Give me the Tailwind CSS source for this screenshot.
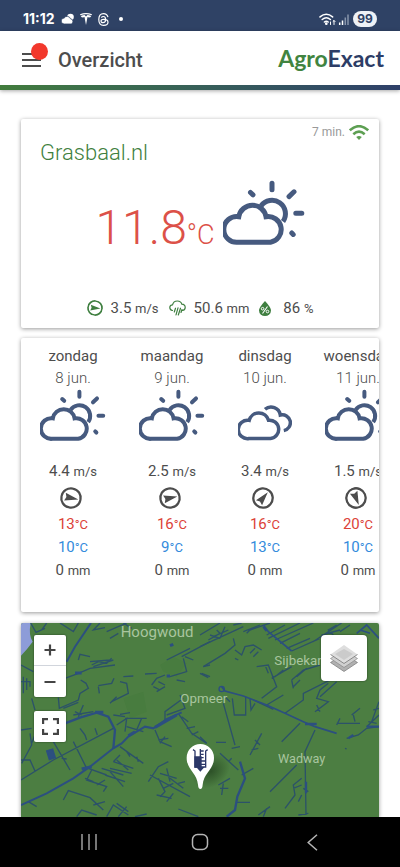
<!DOCTYPE html>
<html lang="nl">
<head>
<meta charset="utf-8">
<meta name="viewport" content="width=device-width, initial-scale=1">
<title>AgroExact</title>
<script src="https://cdn.jsdelivr.net/npm/@tailwindcss/browser@4"></script>
</head>
<body class="flex h-dvh flex-col overflow-hidden bg-white font-['Roboto',sans-serif] text-[#4d4d4d]">

<!-- Shared symbols -->
<svg class="hidden" aria-hidden="true">
  <symbol id="sun-cloud" viewBox="0 0 82 65">
    <g fill="none" stroke="#465a7f" stroke-width="5" stroke-linecap="round" stroke-linejoin="miter">
      <path d="M15.500 62.200A12.900 12.900 0 1 1 15.800 36.700A13.800 13.800 0 0 1 43 36.700A12.900 12.900 0 1 1 47.500 62.200Z"/>
      <path stroke-linecap="butt" d="M38 26A13.200 13.200 0 1 1 60 41.500"/>
      <path d="M49 3.300V9.700M71 11.800L66 16.600M72.800 33.300H78.800M68.800 53L70.200 54.400M27.500 12.500L30 14.800"/>
    </g>
  </symbol>
  <symbol id="clouds" viewBox="0 0 54 52">
    <g fill="none" stroke="#465a7f" stroke-width="3.5">
      <path d="M11 49.500A9.200 9.200 0 1 1 11.200 31.400A10 10 0 0 1 30.500 31.200A9.200 9.200 0 1 1 32.500 49.500Z"/>
      <path d="M27 20.300A9.300 9.300 0 0 1 42.300 26A8 8 0 1 1 45.800 41.600"/>
    </g>
  </symbol>
  <symbol id="arrow" viewBox="0 0 22 22">
    <circle cx="11" cy="11" r="9.700" fill="none" stroke="currentColor" stroke-width="2.300"/>
    <path fill="currentColor" d="M18.500 11L4.800 15L6.300 11L4.800 7Z"/>
  </symbol>
</svg>

<!-- Status bar -->
<div class="flex h-[31px] shrink-0 items-center justify-between bg-[#2f4265] pt-[7px] pr-[23px] pl-[23px] text-white">
  <div class="flex items-center gap-[6px]">
    <span class="font-['Inter',sans-serif] text-sm font-bold">11:12</span>
    <svg class="h-3 w-[13px]" viewBox="0 0 13 11" fill="#fff"><circle cx="9.500" cy="3.500" r="3.300"/><path stroke="#2f4265" stroke-width=".8" d="M3.200 10.500a3 3 0 0 1 0-6a3.500 3.500 0 0 1 6.300.8a2.700 2.700 0 0 1 .8 5.200Z"/></svg>
    <svg class="h-3 w-3" viewBox="0 0 12 12" fill="#fff"><path d="M0 1.200Q6-1 12 1.200L11.600 2.200Q6 .4.400 2.200ZM.7 2.900Q3 2 4.600 2L6 3.400L7.400 2Q9 2 11.300 2.900Q10.500 4.600 9 4.600Q8.400 3.900 7.500 3.900L6 12L4.500 3.900Q3.600 3.900 3 4.600Q1.500 4.600.7 2.900Z"/></svg>
    <svg class="h-[13px] w-[11px]" viewBox="0 0 11 13" fill="none" stroke="#fff" stroke-width="1.200"><path d="M10 4.200Q9 .7 5.500.7Q.8.7.8 6.500Q.8 12.300 5.500 12.300Q10 12.300 10 9.200Q10 6.300 5.600 6.300Q3 6.300 3 8Q3 9.700 5 9.700Q7.600 9.700 7.600 6.500Q7.600 3.500 5.400 3.500Q4 3.500 3.400 4.600"/></svg>
    <span class="ml-1 size-1 rounded-full bg-white"></span>
  </div>
  <div class="flex items-center gap-1">
    <svg class="h-[13px] w-[30px]" viewBox="0 0 30 13" fill="none" stroke="#fff" stroke-width="1.500" stroke-linecap="round"><path d="M1 3.900Q7.300-1.500 13.600 3.900M3.200 6.500Q7.300 3 11.400 6.500M5.400 9Q7.300 7.500 9.200 9"/><circle cx="7.300" cy="10.700" r=".6" fill="#fff"/><path stroke-width="1" d="M11.500 9v2.500M15 11.500V7.500M14 8.500l1-1l1 1"/><g stroke-linecap="butt"><path d="M20.700 12V9.500M23.500 12V7.500"/><path stroke="#8794ab" d="M26.300 12V4.500M29 12V1.500"/></g></svg>
    <span class="flex h-4 w-6 items-center justify-center rounded-full bg-[#eef1f6] font-['Inter',sans-serif] text-[12px] font-bold text-[#2f4265]">99</span>
  </div>
</div>

<!-- App bar -->
<header class="relative z-10 shrink-0 bg-white shadow-[0_1px_4px_rgba(0,0,0,.35)]">
  <div class="flex h-[54px] items-center justify-between pr-4 pl-[22px]">
    <div class="flex items-center gap-4 pt-1">
      <button type="button" aria-label="Menu" class="relative flex h-[50px] w-5 items-center">
        <svg class="h-3.5 w-5" viewBox="0 0 20 14" stroke="#4d4d4d" stroke-width="2"><path d="M0 1H19M0 7H19M0 13H19"/></svg>
        <span class="absolute top-2 left-[9px] size-[17px] rounded-full bg-[#f2382c]"></span>
      </button>
      <h1 class="text-xl font-medium">Overzicht</h1>
    </div>
    <a href="#" class="font-['Lato',sans-serif] text-[23px] leading-7 font-bold text-[#2d3d66]"><span class="text-[#418440]">Agro</span>Exact</a>
  </div>
  <div class="h-[5px] bg-linear-to-r from-[#427c3c] to-[#2f4069]"></div>
</header>

<main class="flex min-h-0 flex-1 flex-col gap-2.5 overflow-hidden px-[21px] pt-[29px]">

  <!-- Current weather -->
  <section class="flex h-[209px] shrink-0 flex-col rounded-xs bg-white shadow-[0_1px_4px_rgba(0,0,0,.4)]">
    <div class="flex h-5 items-center justify-end gap-1 pt-[6px] pr-2.5">
      <span class="text-[12px] text-[#999]">7 min.</span>
      <svg class="h-[15px] w-5" viewBox="0 0 20 15" fill="none" stroke="#5d9f52" stroke-width="2.600"><path d="M.8 5.400Q10-3 19.200 5.400M4.300 9.200Q10 4.200 15.700 9.200"/><path fill="#5d9f52" stroke="none" d="M7.200 11.900Q10 10 12.800 11.900L10 14.900Z"/></svg>
    </div>
    <h2 class="px-[19px] text-[22px] leading-7 font-light text-[#3f7f40]">Grasbaal.nl</h2>
    <div class="flex flex-1 items-center justify-center gap-2">
      <p class="pt-1 font-light text-[#dc5148]"><span class="text-5xl">11.8</span><span class="text-[27px]">°C</span></p>
      <svg class="mb-[30px] h-[65px] w-[82px]"><use href="#sun-cloud"/></svg>
    </div>
    <div class="flex h-10 items-center justify-center gap-2.5 text-[15px]">
      <div class="flex items-center gap-2">
        <svg class="size-4 rotate-[6deg] text-[#3f7f40]"><use href="#arrow"/></svg>
        <span>3.5 <span class="text-[13px]">m/s</span></span>
      </div>
      <div class="flex items-center gap-2">
        <svg class="h-4 w-[17px]" viewBox="0 0 17 16" fill="none" stroke="#3f7f40" stroke-width="1.200" stroke-linecap="round"><path d="M3.500 10.500Q.8 10 .8 7.500Q.8 5 3.500 4.800Q4.500 1 8.300 1Q12 1 12.800 4.200Q16.200 4.500 16.200 7.500Q16.200 10 13.500 10.500M6.500 8.200L5.300 12M9 7.800L7 14.800M11.500 8.200L9.300 15M13 9.500L12 12.500"/></svg>
        <span>50.6 <span class="text-[13px]">mm</span></span>
      </div>
      <div class="flex items-center gap-3">
        <svg class="h-[15px] w-3" viewBox="0 0 12 15"><path fill="#3f7f40" d="M6 0Q12 6.500 12 9.500A6 5.500 0 0 1 0 9.500Q0 6.500 6 0Z"/><path fill="none" stroke="#fff" stroke-width="1.100" d="M8.500 5.500L3.500 12.500"/><circle cx="3.600" cy="7.700" r="1.300" fill="none" stroke="#fff"/><circle cx="8.500" cy="10.500" r="1.300" fill="none" stroke="#fff"/></svg>
        <span>86 <span class="text-[13px]">%</span></span>
      </div>
    </div>
  </section>

  <!-- Forecast -->
  <section class="h-[274px] shrink-0 overflow-hidden rounded-xs bg-white shadow-[0_1px_4px_rgba(0,0,0,.4)]">
    <div class="flex gap-[33px] px-[19px] pt-[7px] text-[15px] leading-[22px] whitespace-nowrap">
      <article class="flex w-[66px] shrink-0 flex-col items-center">
        <h3>zondag</h3><p class="font-light">8 jun.</p>
        <svg class="h-[52px] w-[66px]"><use href="#sun-cloud"/></svg>
        <p class="mt-[19px]">4.4 <span class="text-[13px]">m/s</span></p>
        <svg class="my-1 mr-1 size-[22px] rotate-[12deg]"><use href="#arrow"/></svg>
        <p class="text-[#dc4238]">13<span class="text-[13px]">°C</span></p>
        <p class="text-[#348bdc]">10<span class="text-[13px]">°C</span></p>
        <p>0 <span class="text-[13px]">mm</span></p>
      </article>
      <article class="flex w-[66px] shrink-0 flex-col items-center">
        <h3>maandag</h3><p class="font-light">9 jun.</p>
        <svg class="h-[52px] w-[66px]"><use href="#sun-cloud"/></svg>
        <p class="mt-[19px]">2.5 <span class="text-[13px]">m/s</span></p>
        <svg class="my-1 mr-1 size-[22px] rotate-[-12deg]"><use href="#arrow"/></svg>
        <p class="text-[#dc4238]">16<span class="text-[13px]">°C</span></p>
        <p class="text-[#348bdc]">9<span class="text-[13px]">°C</span></p>
        <p>0 <span class="text-[13px]">mm</span></p>
      </article>
      <article class="flex w-[54px] shrink-0 flex-col items-center">
        <h3>dinsdag</h3><p class="font-light">10 jun.</p>
        <svg class="h-[52px] w-[54px]"><use href="#clouds"/></svg>
        <p class="mt-[19px]">3.4 <span class="text-[13px]">m/s</span></p>
        <svg class="my-1 mr-1 size-[22px] rotate-[-50deg]"><use href="#arrow"/></svg>
        <p class="text-[#dc4238]">16<span class="text-[13px]">°C</span></p>
        <p class="text-[#348bdc]">13<span class="text-[13px]">°C</span></p>
        <p>0 <span class="text-[13px]">mm</span></p>
      </article>
      <article class="flex w-[66px] shrink-0 flex-col items-center">
        <h3>woensdag</h3><p class="font-light">11 jun.</p>
        <svg class="h-[52px] w-[66px]"><use href="#sun-cloud"/></svg>
        <p class="mt-[19px]">1.5 <span class="text-[13px]">m/s</span></p>
        <svg class="my-1 mr-1 size-[22px] rotate-[68deg]"><use href="#arrow"/></svg>
        <p class="text-[#dc4238]">20<span class="text-[13px]">°C</span></p>
        <p class="text-[#348bdc]">10<span class="text-[13px]">°C</span></p>
        <p>0 <span class="text-[13px]">mm</span></p>
      </article>
    </div>
  </section>

  <!-- Map -->
  <section class="relative mt-px min-h-0 flex-1 overflow-hidden rounded-t-xs bg-[#4c7e42] shadow-[0_1px_4px_rgba(0,0,0,.4)]">
    <svg class="block size-full" viewBox="0 0 1074 582" preserveAspectRatio="xMidYMin slice" role="img" aria-label="Kaart">
      <defs>
        <radialGradient id="shade"><stop offset="0" stop-color="#1d3a1a" stop-opacity=".65"/><stop offset="1" stop-color="#1d3a1a" stop-opacity="0"/></radialGradient>
      </defs>
      <g transform="translate(-33 -24)" fill="none" stroke="#2c5269" stroke-width="4">
        <path fill="#8d9cd8" stroke="none" d="M33 24H62Q55 60 68 80Q50 105 33 122Z"/>
        <path fill="#487c3f" stroke="none" d="M450 150L490 125L530 145L500 185L460 170ZM340 250L400 230L410 290L360 310Z"/>
        <path d="M62 24L78 52L105 40M110 24L95 45M150 24L190 50L205 24M270 24L250 45L285 38M290 50L350 24M300 70L325 55M340 24L365 40M33 150L70 170M165 190L205 175L240 160L315 150M240 140L300 135M250 155L310 135M245 150L265 140L290 145L305 130M33 200H62M40 185V235M50 190V225M60 200V215M65 250L75 285M145 248L148 280L205 255L210 235L235 220L228 205L212 195M160 280L205 262M205 135L210 118L240 125M265 215L268 235M265 212L305 205L312 190M305 260L355 235L350 205L330 200M300 265L320 245M340 185L370 183M405 177L440 175M425 210L440 190L465 180M430 215L450 225M445 200L465 210M440 230L465 215M470 135L540 100M480 185L530 170L520 130M515 125L600 80M525 125L550 135M500 195L525 200M580 155L600 150M575 175L600 185M330 298L360 293M310 300L345 305"/>
        <path d="M190 300L250 290M195 290L215 300M205 305L220 270M320 330L350 310L345 350M350 335L400 350M345 310L410 310M380 345L395 310M465 315V290L520 250M470 300L525 280L510 240M505 295L545 355L590 385M515 305L535 320M530 340L555 335M545 360L565 350M435 345L450 380L485 395M445 375L475 370M450 385L465 365M33 345L65 340M60 355L65 390L35 445M75 360L65 385M33 435L60 435L75 468M33 495L130 435L310 340M130 380L180 465M155 430L170 432M190 380L230 460M210 340L225 360M225 360L230 375M255 340L262 360M330 395L400 445M350 410L360 425M380 425L385 440"/>
        <path d="M235 460L290 480M245 465L230 495L290 515L280 530M275 460L340 480M285 480L345 500M300 460L365 475M310 440L370 460M310 440L330 420M320 435L355 465M300 470L340 515M260 510L285 495M225 490L250 500M415 500L445 455L475 440M420 480L540 545M450 475L500 490M445 490L465 530L450 545M460 520L490 505M470 460L480 500M440 540L485 550M470 560L490 535M505 505L525 500M480 490L520 520M55 560L80 575M160 555L175 527L240 548L280 585M250 570L285 560M200 605L215 585L260 600M290 605L310 570L355 600M320 565L355 590M325 605L350 575M375 605L410 597M505 582L565 605"/>
        <g stroke="#2c4f80"><path stroke-width="6" d="M170 140L195 95L243 24M33 570L110 535L190 490L240 455L310 400L335 385L355 365L405 335L430 340L470 312L515 292"/><path stroke-width="7" d="M165 325L210 308L260 293L295 305L315 345L310 400"/><path stroke-width="9" d="M195 174H215M355 362L375 350M215 462L245 455M255 292H280M480 92L490 88M470 183H480M435 337L500 300"/><path fill="#2c4f80" d="M110 408L128 402L136 428L118 434Z"/></g>
      </g>
      <g transform="translate(537 -24)" fill="none" stroke="#2c5269" stroke-width="4">
        <path d="M0 60L60 24M0 95L130 35M25 75L60 55L50 45M30 60L60 70M60 70L75 35M40 65L85 45M100 30L125 24M130 50L180 30M140 55L155 40M150 45L210 24M205 70L300 24M200 60L255 30M225 75L340 24M240 85L300 55M260 100L330 70M275 108L360 70M340 80L370 60L425 24M365 60L420 45M400 60L385 45L410 30M420 50L450 30M10 155L75 115L105 90L100 70M105 105L125 120L135 95L160 90L185 105M150 115L165 100M160 125L175 110M105 130L115 135M170 155L205 150L230 215L185 250M205 175L195 150M215 190L275 155M225 185L250 165M0 175L25 188M275 195L310 165L360 150M290 185L320 160M280 215L300 195M255 295L310 255L310 235L400 190M280 220L275 195M345 290L385 260L350 250L360 225L385 205M360 245L410 200M350 270L360 290"/>
        <path d="M200 270L250 240M97 250L103 300H137V245M150 250L153 285L165 265M70 265L105 390M75 245L90 260M160 255L220 283M245 380L300 325M345 345L315 410L318 600M150 420L185 355M165 375L180 390M155 405L175 400M0 365L20 385M48 382H78M95 400L120 395M60 415L115 465M85 440L95 430M125 480L160 460M55 510L90 490M65 540L70 505M60 520L85 520M210 530L290 450M255 580L285 540L280 510L305 490M280 520L305 510M295 560L305 540M310 520L325 530M295 600L325 595M175 600L210 575M190 605L200 580M110 562H150M410 325L480 325M420 310L410 330M455 300L480 280M460 300L465 320M440 370L475 360L500 340L537 335M500 335L537 300M515 320L537 260M520 285L537 280M505 320L530 325M435 400L440 402"/>
        <g stroke="#2c4f80"><path stroke-width="5" d="M190 30L205 50L275 108M65 215L75 228L130 243L200 270L255 295L310 320L345 335L410 355M470 55L500 30L537 70M480 45L510 55"/><path stroke-width="7" d="M120 440L135 490L112 545L105 585L80 605M315 327H350M190 35L200 48M445 370L460 360M500 335H537M318 500V535"/><circle cx="65" cy="222" r="8"/></g>
      </g>
      <ellipse cx="570" cy="445" rx="62" ry="45" fill="url(#shade)" transform="rotate(-35 570 445)"/>
      <g fill="#a9c59f" font-family="Roboto, sans-serif">
        <text x="299" y="43" font-size="45">Hoogwoud</text>
        <text x="760" y="126" font-size="40">Sijbekarspel</text>
        <text x="478" y="240" font-size="40">Opmeer</text>
        <text x="771" y="420" font-size="38">Wadway</text>
      </g>
      <path fill="#fff" d="M538 498Q532 498 531 485C528 450 497 440 497 404A41 41 0 0 1 579 404C579 440 548 450 545 485Q544 498 538 498Z"/>
      <g fill="none" stroke="#2b3768" stroke-width="4"><path d="M516 380L522 384V432H554V384L560 380"/><path fill="#2b3768" d="M522 402H540V432H522ZM530 434H546L538 443Z"/><path d="M538 378V430M538 384H548M538 394H548M538 404H548M538 414H554M538 424H554"/></g>
    </svg>

    <div class="absolute top-3 left-[13px] flex flex-col gap-3.5">
      <div class="flex w-8 flex-col divide-y divide-gray-300 overflow-hidden rounded-xs bg-white shadow-[0_0_2px_rgba(0,0,0,.6)]">
        <button type="button" aria-label="Inzoomen" class="flex h-[31px] items-center justify-center"><svg class="size-3" viewBox="0 0 12 12" stroke="#444" stroke-width="2.200"><path d="M.5 6H11.500M6 .5V11.500"/></svg></button>
        <button type="button" aria-label="Uitzoomen" class="flex h-[31px] items-center justify-center"><svg class="size-3" viewBox="0 0 12 12" stroke="#444" stroke-width="2.200"><path d="M.5 6H11.500"/></svg></button>
      </div>
      <button type="button" aria-label="Volledig scherm" class="flex h-[31px] w-8 items-center justify-center rounded-xs bg-white shadow-[0_0_2px_rgba(0,0,0,.6)]"><svg class="size-[17px]" viewBox="0 0 17 17" fill="none" stroke="#444" stroke-width="2.200"><path d="M1.100 6V1.100H6M11 1.100H15.900V6M15.900 11V15.900H11M6 15.900H1.100V11"/></svg></button>
    </div>
    <button type="button" aria-label="Lagen" class="absolute top-3 right-3 flex size-[46px] items-center justify-center rounded-sm bg-white shadow-[0_0_2px_rgba(0,0,0,.6)]">
      <svg class="h-[27px] w-7" viewBox="0 0 28 27"><path fill="#b0b0b0" stroke="#777" stroke-width=".7" d="M.5 17.500L14 26.500L27.500 17.500L14 9Z"/><path fill="#d0d0d0" stroke="#888" stroke-width=".7" d="M.5 13.500L14 22.500L27.500 13.500L14 5Z"/><path fill="#dedede" d="M.5 9.500L14 0L27.500 9.500L14 18.500Z"/><path fill="#cbcbcb" d="M5 9L14 4L23 9L14 15Z"/><path fill="none" stroke="#777" stroke-width=".8" d="M.5 9.500L14 18.500L27.500 9.500"/></svg>
    </button>
  </section>
</main>

<!-- System navigation -->
<nav class="relative z-10 grid h-[50px] shrink-0 grid-cols-[1fr_auto_1fr] items-center gap-20 bg-black">
  <button type="button" aria-label="Recente apps" class="justify-self-end pr-[14px]"><svg class="h-4 w-4" viewBox="0 0 16 16" stroke="#b5b5b5" stroke-width="1.300"><path d="M1 0V16M8 0V16M15 0V16"/></svg></button>
  <button type="button" aria-label="Start"><svg class="size-[18px]" viewBox="0 0 18 18" fill="none" stroke="#b5b5b5" stroke-width="1.500"><rect x="1.500" y="1.500" width="15" height="15" rx="5"/></svg></button>
  <button type="button" aria-label="Terug" class="justify-self-start pl-[18px]"><svg class="h-[17px] w-[11px]" viewBox="0 0 11 17" fill="none" stroke="#b5b5b5" stroke-width="1.500"><path d="M10 .7L1.200 8.500L10 16.300"/></svg></button>
</nav>
</body>
</html>
